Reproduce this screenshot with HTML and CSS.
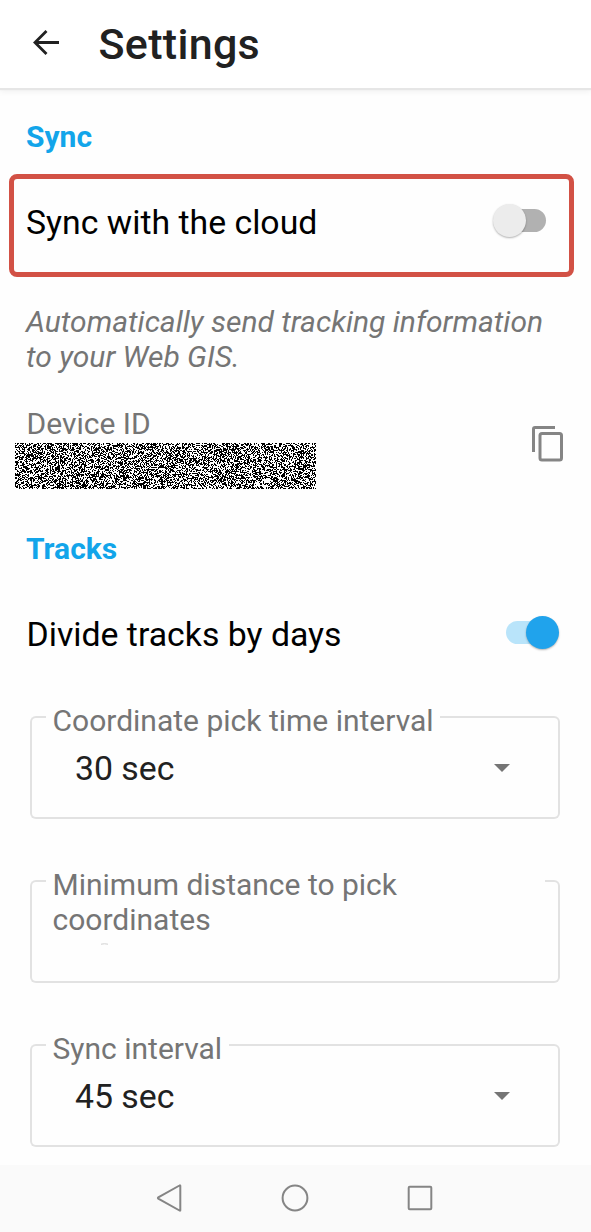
FILE: index.html
```html
<!DOCTYPE html>
<html lang="en">
<head>
<meta charset="utf-8">
<title>Settings</title>
<link rel="stylesheet" href="styles.css">
</head>
<body>
<div class="screen">
  <header class="app-bar">
    <svg class="back" width="28" height="28" viewBox="0 0 28 28"><path d="M27 13.500H2.500M14.500 2 3 13.500l11.500 11.500" fill="none" stroke="#212121" stroke-width="2.800"/></svg>
    <h1 class="title">Settings</h1>
  </header>
  <main class="content">
    <h2 class="section sync-title">Sync</h2>
    <div class="highlight">
      <span class="row-label">Sync with the cloud</span>
      <span class="switch off"><span class="thumb"></span></span>
    </div>
    <p class="hint">Automatically send tracking information<br>to your Web GIS.</p>
    <div class="device">
      <div class="device-info">
        <div class="device-label">Device ID</div>
        <canvas class="redacted" width="301" height="46"></canvas>
      </div>
      <svg class="copy" width="34" height="38" viewBox="0 0 34 38"><path d="M2.500 28V5q0-1.500 1.500-1.500H24" fill="none" stroke="#858585" stroke-width="3"/><rect x="9" y="9.500" width="21.500" height="26.500" rx="2" fill="none" stroke="#858585" stroke-width="3"/></svg>
    </div>
    <h2 class="section tracks-title">Tracks</h2>
    <div class="row">
      <span class="row-label">Divide tracks by days</span>
      <span class="switch on"><span class="thumb"></span></span>
    </div>
    <div class="field">
      <div class="outline"><span class="lead"></span><span class="notch notch-time"></span><span class="trail"></span></div>
      <div class="field-body">
        <div class="label">Coordinate pick time interval</div>
        <div class="value"><span>30 sec</span><svg class="caret" width="16" height="8"><path d="M0 0h16L8 8z" fill="#757575"/></svg></div>
      </div>
    </div>
    <div class="field">
      <div class="outline"><span class="lead"></span><span class="notch notch-distance"></span><span class="trail"></span></div>
      <div class="field-body">
        <div class="label">Minimum distance to pick<br>coordinates</div>
        <svg class="sliver" width="7" height="2"><path d="M0 1.200Q3.500 .3 7 1.200" fill="none" stroke="#d0d0d0"/></svg>
      </div>
    </div>
    <div class="field">
      <div class="outline"><span class="lead"></span><span class="notch notch-sync"></span><span class="trail"></span></div>
      <div class="field-body">
        <div class="label">Sync interval</div>
        <div class="value"><span>45 sec</span><svg class="caret" width="16" height="8"><path d="M0 0h16L8 8z" fill="#757575"/></svg></div>
      </div>
    </div>
  </main>
  <nav class="nav-bar">
    <svg width="28" height="28" viewBox="0 0 28 28"><path d="M24.300 1.800V26.200Q24.300 27 23.500 26.500L2.300 14.600Q1.500 14 2.300 13.400L23.500 1.500Q24.300 1 24.300 1.800z" fill="none" stroke="#858585" stroke-width="2"/></svg>
    <svg width="28" height="28" viewBox="0 0 28 28"><circle cx="14" cy="14" r="12.400" fill="none" stroke="#858585" stroke-width="2"/></svg>
    <svg width="28" height="28" viewBox="0 0 28 28"><rect x="2.700" y="2.700" width="22.600" height="22.600" rx="1" fill="none" stroke="#858585" stroke-width="2"/></svg>
  </nav>
</div>
<script src="noise.js"></script>
</body>
</html>
```
FILE: styles.css
```css
* { box-sizing: border-box; }
body { margin: 0; background: #fefefe; font-family: Roboto, "Liberation Sans", sans-serif; }
h1, h2, p { margin: 0; }
svg, canvas { display: block; flex: none; }
.screen { width: 591px; height: 1232px; display: flex; flex-direction: column; overflow: hidden; }
.app-bar { height: 88px; flex: none; display: flex; align-items: center; padding: 0 0 0 32px; background: #fff; box-shadow: 0 2px 1px #e6e6e6, 0 4px 6px rgba(0,0,0,.05); }
.back { margin-top: -3px; }
.title { margin: -1px 0 0 38.500px; font-size: 43px; line-height: 50px; font-weight: 500; letter-spacing: .3px; color: #212121; }
.content { height: 1077px; flex: none; }
.section { font-size: 30px; line-height: 34px; font-weight: 700; color: #12a5ea; padding-left: 26px; }
.sync-title { padding-top: 32px; }
.highlight { margin: 20px 17px 0 9px; height: 103px; border: 5px solid #d25145; border-radius: 8px; display: flex; justify-content: space-between; padding: 24px 23px 0 12px; }
.row-label { font-size: 33.8px; line-height: 40px; color: #000; white-space: nowrap; }
.switch { width: 53px; height: 34px; flex: none; display: flex; align-items: center; }
.switch::before { content: ""; width: 40px; height: 23px; border-radius: 12px; }
.thumb { width: 33px; height: 33px; border-radius: 50%; flex: none; box-shadow: 0 1px 2px rgba(0,0,0,.3); }
.off { flex-direction: row-reverse; }
.off::before { background: #b1b1b1; }
.off .thumb { background: #ececec; margin-right: -20px; position: relative; }
.on::before { background: #b9e4fa; }
.on .thumb { background: #20a3ec; margin-left: -20px; }
.hint { padding: 27px 0 0 26px; font-size: 30px; line-height: 35px; font-style: italic; color: #757575; white-space: nowrap; }
.device { padding: 32px 26px 0 15px; display: flex; justify-content: space-between; }
.device-label { padding-left: 11.5px; font-size: 30px; line-height: 35px; height: 37px; color: #757575; }
.copy { margin-top: 18px; }
.tracks-title { padding-top: 43px; }
.row { display: flex; justify-content: space-between; align-items: flex-start; padding: 49px 32px 0 26.500px; height: 150px; }
.field { display: grid; width: 530px; height: 103px; margin: 0 0 61px 30px; }
.field > * { grid-area: 1 / 1; }
.outline { display: grid; grid-template-columns: 16px auto 1fr; }
.lead, .notch, .trail { border: 2px solid #e2e2e2; }
.lead { border-right: 0; border-radius: 6px 0 0 6px; }
.notch { border-width: 0 0 2px; }
.trail { border-left: 0; border-radius: 0 6px 6px 0; }
.notch-time { width: 394px; }
.notch-distance { width: 499px; }
.notch-sync { width: 183px; }
.field-body { padding-left: 22.500px; margin-top: -13px; }
.label { font-size: 30px; line-height: 35px; color: #757575; white-space: nowrap; }
.value { display: flex; align-items: center; justify-content: space-between; padding: 0 50px 0 22.500px; margin-top: 11px; font-size: 33.8px; line-height: 40px; color: #212121; }
.caret { margin-top: -2px; }
.sliver { margin: 6px 0 0 48px; }
.nav-bar { height: 67px; flex: none; background: #fafafa; display: flex; gap: 97px; padding: 19px 0 0 156px; }
```
FILE: noise.js
```javascript
// Fills the hidden device identifier with one-pixel noise.
const canvas = document.querySelector('.redacted');
const context = canvas.getContext('2d');
const image = context.createImageData(canvas.width, canvas.height);
let seed = 2463534242;
for (let i = 0; i < image.data.length; i += 4) {
  seed ^= seed << 13; seed ^= seed >>> 17; seed ^= seed << 5;
  const shade = (seed >>> 0) / 4294967296 < 0.5 ? 0 : 255;
  image.data[i] = image.data[i + 1] = image.data[i + 2] = shade;
  image.data[i + 3] = 255;
}
context.putImageData(image, 0, 0);
```
